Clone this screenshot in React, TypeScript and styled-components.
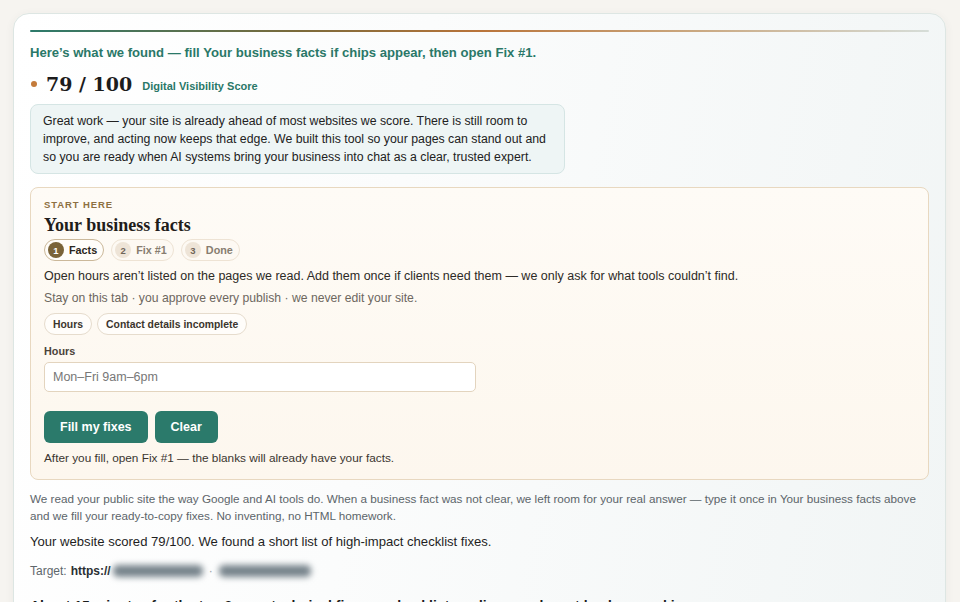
import React from "react";
import styled, { createGlobalStyle } from "styled-components";

const Global = createGlobalStyle`
  html, body {
    margin: 0;
    padding: 0;
    background: #f6f4f0;
    font-family: "Liberation Sans", Arial, sans-serif;
    color: #222;
  }
  * { box-sizing: border-box; }
`;

const Page = styled.div`
  padding: 13px 14px 0 13px;
  height: 602px;
  overflow: hidden;
`;

const Card = styled.section`
  border: 1px solid #dde6e3;
  border-radius: 16px;
  background: linear-gradient(100deg, #ffffff 0%, #fbfcfc 40%, #f1f5f5 100%);
  box-shadow: 0 2px 10px rgba(60, 70, 60, 0.06);
  padding: 16px 16px 40px 16px;
  min-height: 620px;
`;

const Rule = styled.div`
  height: 2px;
  border-radius: 2px;
  background: linear-gradient(
    90deg,
    #2c7a6b 0%,
    #7b6a3a 30%,
    #b9743a 50%,
    #c9a47a 72%,
    #d6ddd8 100%
  );
`;

const Lead = styled.h2`
  margin: 11px 0 0;
  font-size: 13.1px;
  line-height: 20px;
  font-weight: 700;
  color: #2a7868;
`;

const ScoreRow = styled.div`
  display: flex;
  align-items: center;
  margin-top: 7px;
  height: 28px;
`;

const Dot = styled.span`
  width: 6px;
  height: 6px;
  border-radius: 50%;
  background: #c47b3b;
  margin: 0 9px 0 1px;
`;

const Score = styled.span`
  font-family: "DejaVu Serif", "Liberation Serif", Georgia, serif;
  font-weight: 700;
  font-size: 19px;
  color: #1c1c1c;
`;

const ScoreLabel = styled.span`
  margin-left: 10px;
  font-size: 11px;
  font-weight: 700;
  color: #2a7868;
  padding-top: 3px;
`;

const Intro = styled.div`
  margin-top: 6px;
  width: 535px;
  padding: 7px 12px;
  border: 1px solid #d5e5e4;
  border-radius: 8px;
  background: #eef5f5;
  font-size: 12.3px;
  line-height: 18px;
  color: #222;
  white-space: nowrap;
`;

const StartCard = styled.div`
  margin-top: 13px;
  border: 1px solid #e8d8c0;
  border-radius: 8px;
  background: linear-gradient(180deg, #fefbf6 0%, #fdf7ee 100%);
  padding: 11px 13px 13px;
`;

const Eyebrow = styled.div`
  font-size: 9.5px;
  line-height: 12px;
  font-weight: 700;
  letter-spacing: 0.9px;
  color: #8d7042;
  text-transform: uppercase;
`;

const Title = styled.h3`
  margin: 3px 0 0;
  font-family: "Liberation Serif", Georgia, serif;
  font-size: 18px;
  line-height: 22px;
  font-weight: 700;
  color: #1f1d1a;
`;

const Steps = styled.div`
  display: flex;
  gap: 7px;
  margin-top: 3px;
`;

const Step = styled.div<{ $active?: boolean }>`
  display: flex;
  align-items: center;
  gap: 5px;
  height: 22px;
  padding: 0 6px 0 3px;
  border-radius: 11px;
  border: 1px solid ${(p) => (p.$active ? "#cbb89a" : "#eee3d4")};
  background: ${(p) => (p.$active ? "#fffdf9" : "#fdf9f3")};
  font-size: 10.8px;
  font-weight: 700;
  color: ${(p) => (p.$active ? "#2b2620" : "#877d70")};
`;

const StepNum = styled.span<{ $active?: boolean }>`
  width: 16px;
  height: 16px;
  border-radius: 50%;
  display: flex;
  align-items: center;
  justify-content: center;
  font-size: 9.5px;
  font-weight: 700;
  background: ${(p) => (p.$active ? "#7a6338" : "#eee4d7")};
  color: ${(p) => (p.$active ? "#ffffff" : "#6f6558")};
`;

const Body = styled.p`
  margin: 6px 0 0;
  font-size: 12.5px;
  line-height: 18px;
  color: #2d2a26;
`;

const Muted = styled.p`
  margin: 5px 0 0;
  font-size: 12.2px;
  line-height: 16px;
  color: #6d675f;
`;

const Chips = styled.div`
  display: flex;
  gap: 5px;
  margin-top: 7px;
`;

const Chip = styled.span`
  display: flex;
  align-items: center;
  height: 22px;
  padding: 0 8px;
  border-radius: 11px;
  border: 1px solid #e6dccd;
  background: #fffdfa;
  font-size: 10.4px;
  font-weight: 700;
  color: #3b352d;
`;

const Label = styled.label`
  display: block;
  margin-top: 9px;
  font-size: 10.8px;
  line-height: 14px;
  font-weight: 700;
  color: #4a433a;
`;

const Input = styled.input`
  display: block;
  margin-top: 4px;
  width: 432px;
  height: 30px;
  padding: 0 8px;
  border: 1px solid #e3d4be;
  border-radius: 5px;
  background: #ffffff;
  font-family: "Liberation Sans", Arial, sans-serif;
  font-size: 12.5px;
  color: #333;
  outline: none;
  &::placeholder { color: #777; }
`;

const Actions = styled.div`
  display: flex;
  gap: 7px;
  margin-top: 19px;
`;

const Button = styled.button`
  height: 32px;
  padding: 0 16px;
  border: 0;
  border-radius: 6px;
  background: #2b7a6b;
  color: #ffffff;
  font-family: "Liberation Sans", Arial, sans-serif;
  font-size: 12.5px;
  font-weight: 700;
  cursor: pointer;
`;

const After = styled.p`
  margin: 7px 0 0;
  font-size: 11.8px;
  line-height: 16px;
  color: #3a352f;
`;

const Note = styled.p`
  margin: 10px 0 0;
  font-size: 11.7px;
  line-height: 17px;
  color: #5c656a;
`;

const Summary = styled.p`
  margin: 9px 0 0;
  font-size: 13.1px;
  line-height: 18px;
  color: #1f1f1f;
`;

const Target = styled.p`
  margin: 11px 0 0;
  display: flex;
  align-items: center;
  font-size: 12px;
  line-height: 18px;
  color: #5e676c;
  strong { color: #2a2f33; margin: 0 2px 0 4px; }
`;

const Redacted = styled.span<{ $w: number }>`
  display: inline-block;
  width: ${(p) => p.$w}px;
  height: 12px;
  border-radius: 5px;
  background: #76838b;
  filter: blur(3px);
`;

const Sep = styled.span`
  margin: 0 6px;
  color: #9aa3a8;
`;

const Subhead = styled.h4`
  margin: 16px 0 0;
  font-size: 14px;
  line-height: 20px;
  font-weight: 700;
  color: #1c1c1c;
`;

export default function App() {
  return (
    <>
      <Global />
      <Page>
        <Card>
          <Rule />
          <Lead>
            Here’s what we found — fill Your business facts if chips appear, then open Fix #1.
          </Lead>
          <ScoreRow>
            <Dot />
            <Score>79 / 100</Score>
            <ScoreLabel>Digital Visibility Score</ScoreLabel>
          </ScoreRow>
          <Intro>
            Great work — your site is already ahead of most websites we score. There is still room to
            <br />
            improve, and acting now keeps that edge. We built this tool so your pages can stand out and
            <br />
            so you are ready when AI systems bring your business into chat as a clear, trusted expert.
          </Intro>

          <StartCard>
            <Eyebrow>Start here</Eyebrow>
            <Title>Your business facts</Title>
            <Steps>
              <Step $active>
                <StepNum $active>1</StepNum>Facts
              </Step>
              <Step>
                <StepNum>2</StepNum>Fix #1
              </Step>
              <Step>
                <StepNum>3</StepNum>Done
              </Step>
            </Steps>
            <Body>
              Open hours aren’t listed on the pages we read. Add them once if clients need them — we only
              ask for what tools couldn’t find.
            </Body>
            <Muted>Stay on this tab · you approve every publish · we never edit your site.</Muted>
            <Chips>
              <Chip>Hours</Chip>
              <Chip>Contact details incomplete</Chip>
            </Chips>
            <Label htmlFor="hours">Hours</Label>
            <Input id="hours" placeholder="Mon–Fri 9am–6pm" />
            <Actions>
              <Button>Fill my fixes</Button>
              <Button>Clear</Button>
            </Actions>
            <After>After you fill, open Fix #1 — the blanks will already have your facts.</After>
          </StartCard>

          <Note>
            We read your public site the way Google and AI tools do. When a business fact was not clear, we
            left room for your real answer — type it once in Your business facts above and we fill your
            ready-to-copy fixes. No inventing, no HTML homework.
          </Note>
          <Summary>Your website scored 79/100. We found a short list of high-impact checklist fixes.</Summary>
          <Target>
            Target:<strong>https://</strong>
            <Redacted $w={90} />
            <Sep>·</Sep>
            <Redacted $w={92} />
          </Target>
          <Subhead>
            About 15 minutes for the top 3 easy technical fixes — checklist readiness only, not leads or rankings.
          </Subhead>
        </Card>
      </Page>
    </>
  );
}
